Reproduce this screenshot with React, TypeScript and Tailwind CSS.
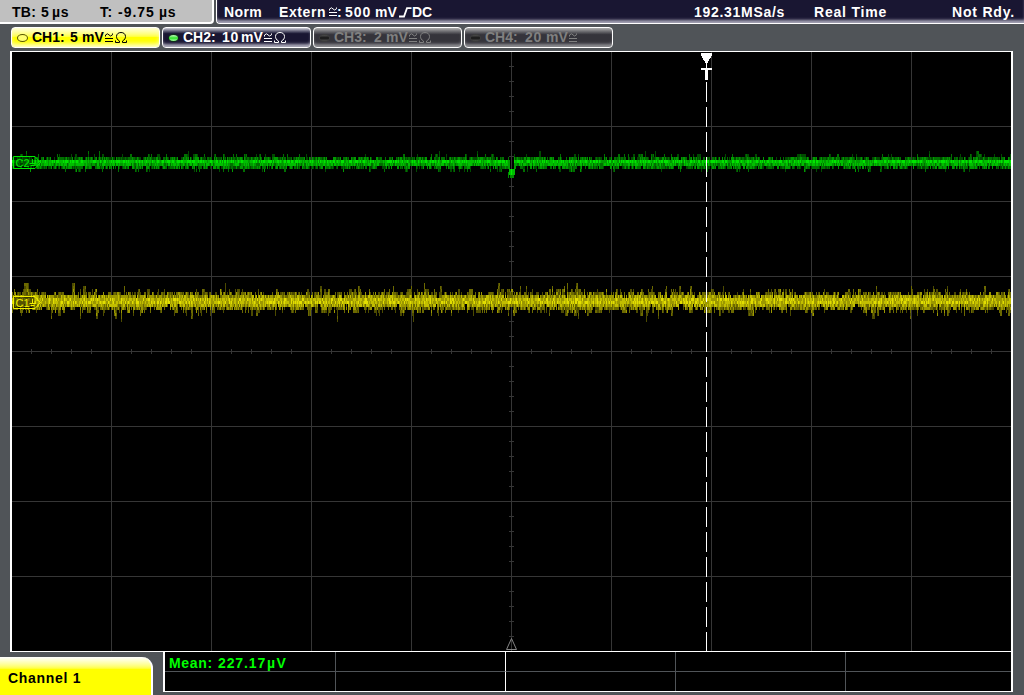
import clsx from 'clsx'

const SANS = "font-['Liberation_Sans',Arial,sans-serif]"

// small deterministic random source so that the noise is stable between renders
function makeRandom(seed: number) {
  let s = seed
  return () => {
    s = (s * 1664525 + 1013904223) % 4294967296
    return s / 4294967296
  }
}

type Band = { y: number; fill: number; level: number }

// fill = how often a cell is lit, level = its mean brightness (0..4)
const greenBands: Band[] = [
  { y: 151, fill: 0.008, level: 0 },
  { y: 154, fill: 0.13, level: 0.3 },
  { y: 157, fill: 0.8, level: 0.9 },
  { y: 160, fill: 1, level: 3.2 },
  { y: 163, fill: 1, level: 2.3 },
  { y: 166, fill: 0.72, level: 1.1 },
  { y: 169, fill: 0.1, level: 0.6 },
]

const yellowBands: Band[] = [
  { y: 283, fill: 0.012, level: 0.3 },
  { y: 286, fill: 0.04, level: 0.5 },
  { y: 289, fill: 0.18, level: 0.5 },
  { y: 292, fill: 0.58, level: 0.8 },
  { y: 295, fill: 0.93, level: 1.9 },
  { y: 298, fill: 1, level: 2.7 },
  { y: 301, fill: 1, level: 2.8 },
  { y: 304, fill: 0.98, level: 2.1 },
  { y: 307, fill: 0.75, level: 1.2 },
  { y: 310, fill: 0.32, level: 0.6 },
  { y: 313, fill: 0.1, level: 0.5 },
  { y: 316, fill: 0.025, level: 0.5 },
  { y: 319, fill: 0.006, level: 0.5 },
]

const greenShades = ['#004a00', '#007000', '#009b00', '#00be00', '#00e400']
const yellowShades = ['#4c4a00', '#6c6900', '#9c9800', '#c2be00', '#e2de00']

function noisePaths(bands: Band[], seed: number, dip: boolean) {
  const rnd = makeRandom(seed)
  const paths = ['', '', '', '', '']
  const mid = bands.findIndex(b => b.fill === 1)
  let up = 0.5
  let down = 0.5
  for (let x = 12; x < 1011; x++) {
    // neighbouring samples sometimes share the same peak
    if (rnd() > 0.3) up = rnd()
    if (rnd() > 0.3) down = rnd()
    if (dip && x >= 509 && x <= 513) continue
    bands.forEach((b, i) => {
      const edge = i <= mid ? up : down
      const jitter = rnd()
      if (edge > b.fill) return
      const level = Math.max(0, Math.min(4, Math.round(b.level + (jitter - 0.5) * 2.4)))
      paths[level] += `M${x} ${b.y}h1v3h-1z`
    })
  }
  return paths
}

const greenTrace = noisePaths(greenBands, 17, true)
const yellowTrace = noisePaths(yellowBands, 91, false)

function Trace({ paths, shades }: { paths: string[]; shades: string[] }) {
  return (
    <g shapeRendering="crispEdges">
      {paths.map((d, i) => (
        <path key={i} d={d} fill={shades[i]} />
      ))}
    </g>
  )
}

function ChannelFlag({ y, label, color }: { y: number; label: string; color: string }) {
  return (
    <g stroke={color} fill="none">
      <path d={`M14 ${y + 1}h20v11h-20z`} fill="#000" fillOpacity="0.45" stroke="none" />
      <path d={`M13.5 ${y + 0.5}h21.5l5.5 6l-5.5 6h-21.5z`} />
      <text x="15.5" y={y + 10.5} fontSize="11" fill={color} stroke="none" className={SANS}>
        {label}
      </text>
      <path d={`M32.5 ${y + 3}v4M29.5 ${y + 7.5}h6M30.5 ${y + 9.5}h4`} />
    </g>
  )
}

function Graticule() {
  const cols = [111, 211, 311, 411, 511, 611, 711, 811, 911]
  const rows = [126, 201, 276, 351, 426, 501, 576]
  let ticks = ''
  for (let y = 66; y < 650; y += 15) ticks += `M509 ${y}.5h5`
  for (let x = 31; x < 1010; x += 20) ticks += `M${x}.5 349v5`
  return (
    <g stroke="#363636" shapeRendering="crispEdges">
      {cols.map(x => (
        <path key={x} d={`M${x}.5 52v599`} />
      ))}
      {rows.map(y => (
        <path key={y} d={`M12 ${y}.5h999`} />
      ))}
      <path d={ticks} fill="none" />
    </g>
  )
}

function Plot() {
  return (
    <div className="mt-[3px] ml-[10px] h-[601px] w-[1003px] border-x-2 border-y border-white bg-black">
      <svg viewBox="12 52 999 599" className="block h-[599px] w-[999px]">
        <Graticule />
        <Trace paths={greenTrace} shades={greenShades} />
        <g shapeRendering="crispEdges">
          <path d="M508 160h2v9h-2zM514 163h2v6h-2z" fill="#009b00" />
          <path d="M509 169h6v6h-6z" fill="#00be00" />
          <path d="M508 172h1v6h-1zM510 175h4v3h-4z" fill="#008a00" />
          <path d="M511 169h1v6h-1z" fill="#00ee00" />
        </g>
        <Trace paths={yellowTrace} shades={yellowShades} />
        <ChannelFlag y={156} label="C2" color="#00e800" />
        <ChannelFlag y={296} label="C1" color="#f4f000" />
        <path d="M511.5 638.5L506.5 649.5H516.5Z" fill="none" stroke="#858585" />
        <g shapeRendering="crispEdges" fill="#fff">
          <path d="M701 53h11v2l-5 9h-1l-5 -9z" />
          <path d="M706 63h1v5h-1zM701 68h11v2h-11zM705 70h3v10h-3z" />
          <path d="M706.5 82V651" stroke="#fff" strokeDasharray="20 5" />
        </g>
      </svg>
    </div>
  )
}

function Omega() {
  return (
    <svg viewBox="0 0 12 11" className="mb-[1px] block h-[11px] w-[12px] shrink-0" fill="none" stroke="currentColor">
      <path d="M0.5 8.5v2h4v-1.5C2.3 7.8 1.5 6.3 1.5 4.5C1.5 2 3.4 0.5 6 0.5S10.5 2 10.5 4.5C10.5 6.3 9.7 7.8 7.5 9v1.5h4v-2" />
    </svg>
  )
}

function Approx({ className }: { className?: string }) {
  return (
    <svg viewBox="0 0 8 9" className={clsx('block h-[9px] w-[8px] shrink-0', className)} fill="none" stroke="currentColor">
      <path d="M0.5 3.5V2L2.5 0.8L5.5 3L7.5 1.8V0.5M0 5.5h8M0 8.5h8" />
    </svg>
  )
}

type ChannelProps = {
  name: string
  value: string
  valueWidth: string
  nameWidth: string
  look: string
  led: string
  ledBorder: string
  omega?: boolean
}

function ChannelButton({ name, value, valueWidth, nameWidth, look, led, ledBorder, omega = true }: ChannelProps) {
  return (
    <button
      className={clsx(
        'flex h-[21px] w-[149px] items-center rounded-[4px] border border-white pl-[5px] text-[14px] leading-[19px] font-bold whitespace-nowrap',
        look,
      )}
    >
      <span className={clsx('mr-[4px] block h-[8px] w-[11px] shrink-0 rounded-[50%] border', led, ledBorder)} />
      <span className={clsx('shrink-0 text-left', nameWidth)}>{name}</span>
      <span className={clsx('shrink-0 text-left tracking-[0.6px]', valueWidth)}>{value}</span>
      <span className="w-[23px] shrink-0 text-left">mV</span>
      <Approx className="mr-[2px]" />
      {omega && <Omega />}
    </button>
  )
}

function ChannelBar() {
  const off = 'bg-linear-to-b from-[#b0b0b0] from-0% via-[#35343b] via-35% to-[#35343b] to-70% text-[#808080] shadow-[inset_0_-4px_3px_-1px_#8c8c90]'
  return (
    <div className="mt-[3px] ml-[11px] flex gap-[2px]">
      <ChannelButton
        name="CH1:" value="5" nameWidth="w-[38px]" valueWidth="w-[12px]"
        look="bg-linear-to-b from-[#ffffd8] from-0% via-[#ffff70] via-35% to-[#ffff00] to-50% text-black shadow-[inset_0_-4px_4px_-1px_#ffffc8]"
        led="bg-[#ffff70]" ledBorder="border-[#555500]"
      />
      <ChannelButton
        name="CH2:" value="10" nameWidth="w-[39px]" valueWidth="w-[19px]"
        look="bg-linear-to-b from-[#d0d0d8] from-0% via-[#191632] via-30% to-[#191632] to-70% text-white shadow-[inset_0_-4px_3px_-1px_#aaa8b8]"
        led="bg-linear-to-b from-[#c0ffc0] via-[#10e010] to-[#a0ffa0]" ledBorder="border-[#103018]"
      />
      <ChannelButton
        name="CH3:" value="2" nameWidth="w-[40px]" valueWidth="w-[12px]" look={off}
        led="bg-linear-to-b from-[#505050] via-[#151515] to-[#505050]" ledBorder="border-[#3c3c3c]"
      />
      <ChannelButton
        name="CH4:" value="20" nameWidth="w-[40px]" valueWidth="w-[21px]" look={off} omega={false}
        led="bg-linear-to-b from-[#505050] via-[#151515] to-[#505050]" ledBorder="border-[#3c3c3c]"
      />
    </div>
  )
}

function TopBar() {
  return (
    <header className="flex h-[24px] text-[14px] leading-[24px] font-bold whitespace-nowrap">
      <div className="mr-[2px] flex w-[214px] rounded-br-[4px] border-r-2 border-b-2 border-white bg-[#c0c0c0] pl-[12px] text-black">
        <span className="w-[29px] tracking-[0.3px]">TB:</span>
        <span className="w-[11px]">5</span>
        <span className="w-[48px] tracking-[0.6px]">µs</span>
        <span className="w-[18px] tracking-[0.5px]">T:</span>
        <span className="w-[41px] tracking-[1px]">-9.75</span>
        <span className="tracking-[0.6px]">µs</span>
      </div>
      <div className="flex grow rounded-bl-[4px] border-b border-l border-white bg-[#191632] pl-[7px] text-white shadow-[inset_0_-4px_3px_-1px_#a4a2b4]">
        <span className="w-[55px] tracking-[0.4px]">Norm</span>
        <span className="w-[50px] tracking-[0.6px]">Extern</span>
        <Approx className="mt-[7px]" />
        <span className="w-[8px]">:</span>
        <span className="w-[30px] tracking-[1px]">500</span>
        <span className="w-[24px]">mV</span>
        <svg viewBox="0 0 13 11" className="mt-[7px] block h-[11px] w-[13px]" fill="none" stroke="#fff" strokeWidth="1.8">
          <path d="M0 9.5h5L8 1.2H12.5" />
        </svg>
        <span className="w-[282px]">DC</span>
        <span className="w-[120px] tracking-[0.7px]">192.31MSa/s</span>
        <span className="w-[138px] tracking-[0.8px]">Real Time</span>
        <span className="tracking-[0.8px]">Not Rdy.</span>
      </div>
    </header>
  )
}

function Measurements() {
  const head = 'border-[#505458]'
  return (
    <div className="ml-[10px] grid h-[40px] w-[850px] grid-cols-[171px_170px_170px_170px_165px] grid-rows-[20px_19px] border-r-2 border-b border-l-2 border-white bg-black text-[14px] leading-[22px] font-bold whitespace-nowrap text-[#00ff00]">
      <div className={clsx('flex border-r border-b pl-[4px]', head)}>
        <span className="w-[49px] tracking-[0.7px]">Mean:</span>
        <span className="w-[49px] tracking-[0.9px]">227.17</span>
        <span className="tracking-[1.4px]">µV</span>
      </div>
      <div className="border-r border-b border-r-white border-b-[#505458]" />
      <div className={clsx('border-r border-b', head)} />
      <div className={clsx('border-r border-b', head)} />
      <div className={clsx('border-b', head)} />
      <div className={clsx('border-r', head)} />
      <div className="border-r border-white" />
      <div className={clsx('border-r', head)} />
      <div className={clsx('border-r', head)} />
      <div />
    </div>
  )
}

export default function App() {
  return (
    <main className={clsx('h-[695px] w-[1024px] overflow-hidden bg-[#505458]', SANS)}>
      <TopBar />
      <ChannelBar />
      <Plot />
      <footer className="flex">
        <div className="mt-[5px] h-[38px] w-[153px] rounded-tr-[11px] border-r-2 border-white bg-linear-to-b from-white from-0% via-[#ffff00] via-32% to-[#ffff00] pt-[10px] pl-[8px] text-[14px] leading-[22px] font-bold tracking-[0.7px] text-black">
          Channel 1
        </div>
        <Measurements />
      </footer>
    </main>
  )
}
